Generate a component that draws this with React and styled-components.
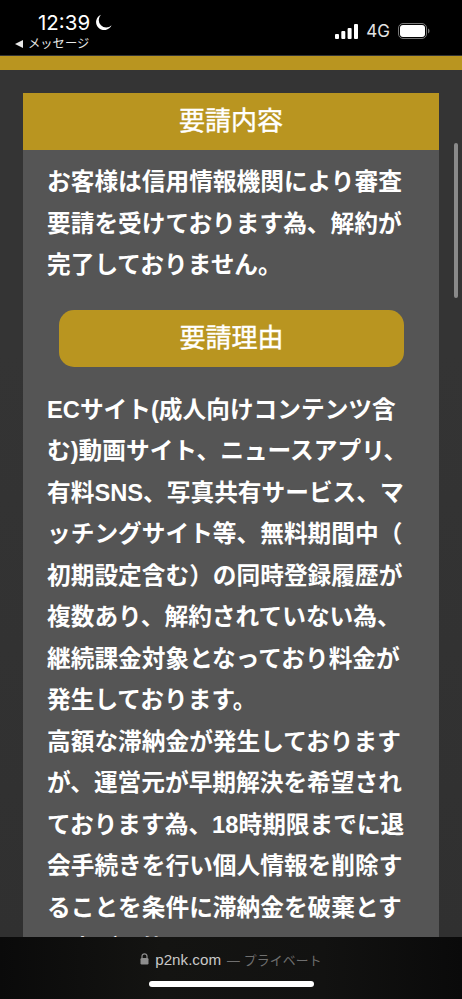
import React from 'react';
import styled, { createGlobalStyle } from 'styled-components';

const GlobalStyle = createGlobalStyle`
    html, body {
        margin: 0;
        padding: 0;
        background: #000;
    }
`;

const Screen = styled.div`
    display: flex;
    flex-direction: column;
    width: 462px;
    height: 999px;
    overflow: hidden;
    font-family: "Liberation Sans", "Noto Sans CJK JP", sans-serif;
    color: #fff;
`;

const StatusBar = styled.header`
    flex: none;
    height: 55px;
    background: #000;
    display: flex;
    justify-content: space-between;
    box-sizing: border-box;
    padding: 0 32px 0 15px;
`;

const StatusLeft = styled.div`
    display: flex;
    flex-direction: column;
`;

const Clock = styled.div`
    display: flex;
    align-items: center;
    gap: 5px;
    height: 22px;
    margin: 11px 0 0 23px;
    font-size: 20.5px;
    font-family: "Inter", "Liberation Sans", sans-serif;
`;

const BackLink = styled.div`
    display: flex;
    align-items: center;
    gap: 5px;
    margin-top: 3px;
    font-size: 12.3px;
    line-height: 16px;
    color: #e8e8e8;
`;

const BackArrow = styled.span`
    width: 0;
    height: 0;
    border-style: solid;
    border-width: 4px 8px 4px 0;
    border-color: transparent #e8e8e8 transparent transparent;
`;

const StatusRight = styled.div`
    display: flex;
    align-items: center;
    gap: 8px;
    height: 20px;
    margin-top: 21px;
`;

const Network = styled.span`
    font-size: 17px;
    font-family: "Inter", "Liberation Sans", sans-serif;
    color: #e4e4e4;
`;

const Viewport = styled.div`
    position: relative;
    flex: 1;
    min-height: 0;
    overflow: hidden;
    background: linear-gradient(to bottom, #343434 0, #343434 300px, #303030 100%);
`;

const GoldBand = styled.div`
    height: 14px;
    margin-top: 1px;
    background: #b99520;
`;

const Panel = styled.main`
    width: 416px;
    margin: 23px 0 0 23px;
    background: #555;
`;

const PanelTitle = styled.h2`
    margin: 0;
    height: 57px;
    background: #b99520;
    font-size: 26px;
    font-weight: 400;
    line-height: 56px;
    text-align: center;
    -webkit-text-stroke: 0.4px #fff;
`;

const Paragraph = styled.p`
    margin: 0;
    padding: ${(p) => p.$top}px 24px 0;
    font-size: 23.7px;
    font-weight: 700;
    line-height: 41.5px;
    white-space: nowrap;
`;

const ReasonPill = styled.h3`
    margin: 23px 35px 0 36px;
    height: 57px;
    border-radius: 15px;
    background: #b99520;
    font-size: 26px;
    font-weight: 400;
    line-height: 56px;
    text-align: center;
    -webkit-text-stroke: 0.4px #fff;
`;

const Scrollbar = styled.div`
    position: absolute;
    top: 88px;
    right: 4px;
    width: 4px;
    height: 155px;
    border-radius: 2px;
    background: #8a8a8a;
`;

const BottomBar = styled.footer`
    flex: none;
    height: 62px;
    background: linear-gradient(to right, #0a0a0a 0, #141412 35%, #121211 70%, #0a0a0a 100%);
    display: flex;
    flex-direction: column;
    align-items: center;
`;

const Address = styled.div`
    display: flex;
    align-items: center;
    gap: 6px;
    margin-top: 13px;
    height: 18px;
    font-size: 15.2px;
    color: #c8c8c8;
`;

const Private = styled.span`
    font-size: 12.8px;
    color: #6f6f6f;
    letter-spacing: 0.2px;
`;

const HomeIndicator = styled.div`
    width: 165px;
    height: 6px;
    margin-top: 13px;
    border-radius: 3px;
    background: #fff;
`;

const intro = [
    'お客様は信用情報機関により審査',
    '要請を受けております為、解約が',
    '完了しておりません。',
];

const reason = [
    'ECサイト(成人向けコンテンツ含',
    'む)動画サイト、ニュースアプリ、',
    '有料SNS、写真共有サービス、マ',
    'ッチングサイト等、無料期間中（',
    '初期設定含む）の同時登録履歴が',
    '複数あり、解約されていない為、',
    '継続課金対象となっており料金が',
    '発生しております。',
    '高額な滞納金が発生しております',
    'が、運営元が早期解決を希望され',
    'ております為、18時期限までに退',
    '会手続きを行い個人情報を削除す',
    'ることを条件に滞納金を破棄とす',
    'る事が可能です。',
];

const lines = (list) => list.map((text, i) => (
    <React.Fragment key={i}>{text}<br /></React.Fragment>
));

const MoonIcon = () => (
    <svg width="17" height="17" viewBox="0 0 16 16">
        <path d="M5.6 .6A7.6 7.6 0 1 0 15.6 10.6 6.6 6.6 0 0 1 5.6 .6Z" fill="#fff" />
    </svg>
);

const SignalIcon = () => (
    <svg width="23" height="15" viewBox="0 0 23 15">
        <rect x="0" y="10" width="4" height="5" rx="1" fill="#fff" />
        <rect x="6.3" y="7" width="4" height="8" rx="1" fill="#fff" />
        <rect x="12.6" y="4" width="4" height="11" rx="1" fill="#fff" />
        <rect x="19" y="0" width="4" height="15" rx="1" fill="#fff" />
    </svg>
);

const BatteryIcon = () => (
    <svg width="32" height="16" viewBox="0 0 32 16">
        <rect x=".5" y=".5" width="28" height="15" rx="4.5" fill="none" stroke="#777" />
        <rect x="2" y="2" width="25" height="12" rx="3" fill="#fff" />
        <path d="M30 5.5c1 .4 1.5 1.4 1.5 2.5s-.5 2.1-1.5 2.5Z" fill="#777" />
    </svg>
);

const LockIcon = () => (
    <svg width="9" height="12" viewBox="0 0 9 12">
        <path d="M2 5V3.3a2.5 2.5 0 0 1 5 0V5" fill="none" stroke="#8e8e8e" strokeWidth="1.2" />
        <rect x="0.5" y="5" width="8" height="6.5" rx="1.2" fill="#8e8e8e" />
    </svg>
);

export default function App() {
    return (
        <Screen>
            <GlobalStyle />
            <StatusBar>
                <StatusLeft>
                    <Clock>12:39 <MoonIcon /></Clock>
                    <BackLink><BackArrow />メッセージ</BackLink>
                </StatusLeft>
                <StatusRight>
                    <SignalIcon />
                    <Network>4G</Network>
                    <BatteryIcon />
                </StatusRight>
            </StatusBar>
            <Viewport>
                <GoldBand />
                <Panel>
                    <PanelTitle>要請内容</PanelTitle>
                    <Paragraph $top={12}>{lines(intro)}</Paragraph>
                    <ReasonPill>要請理由</ReasonPill>
                    <Paragraph $top={23}>{lines(reason)}</Paragraph>
                </Panel>
                <Scrollbar />
            </Viewport>
            <BottomBar>
                <Address>
                    <LockIcon />
                    <span>p2nk.com</span>
                    <Private>— プライベート</Private>
                </Address>
                <HomeIndicator />
            </BottomBar>
        </Screen>
    );
}
